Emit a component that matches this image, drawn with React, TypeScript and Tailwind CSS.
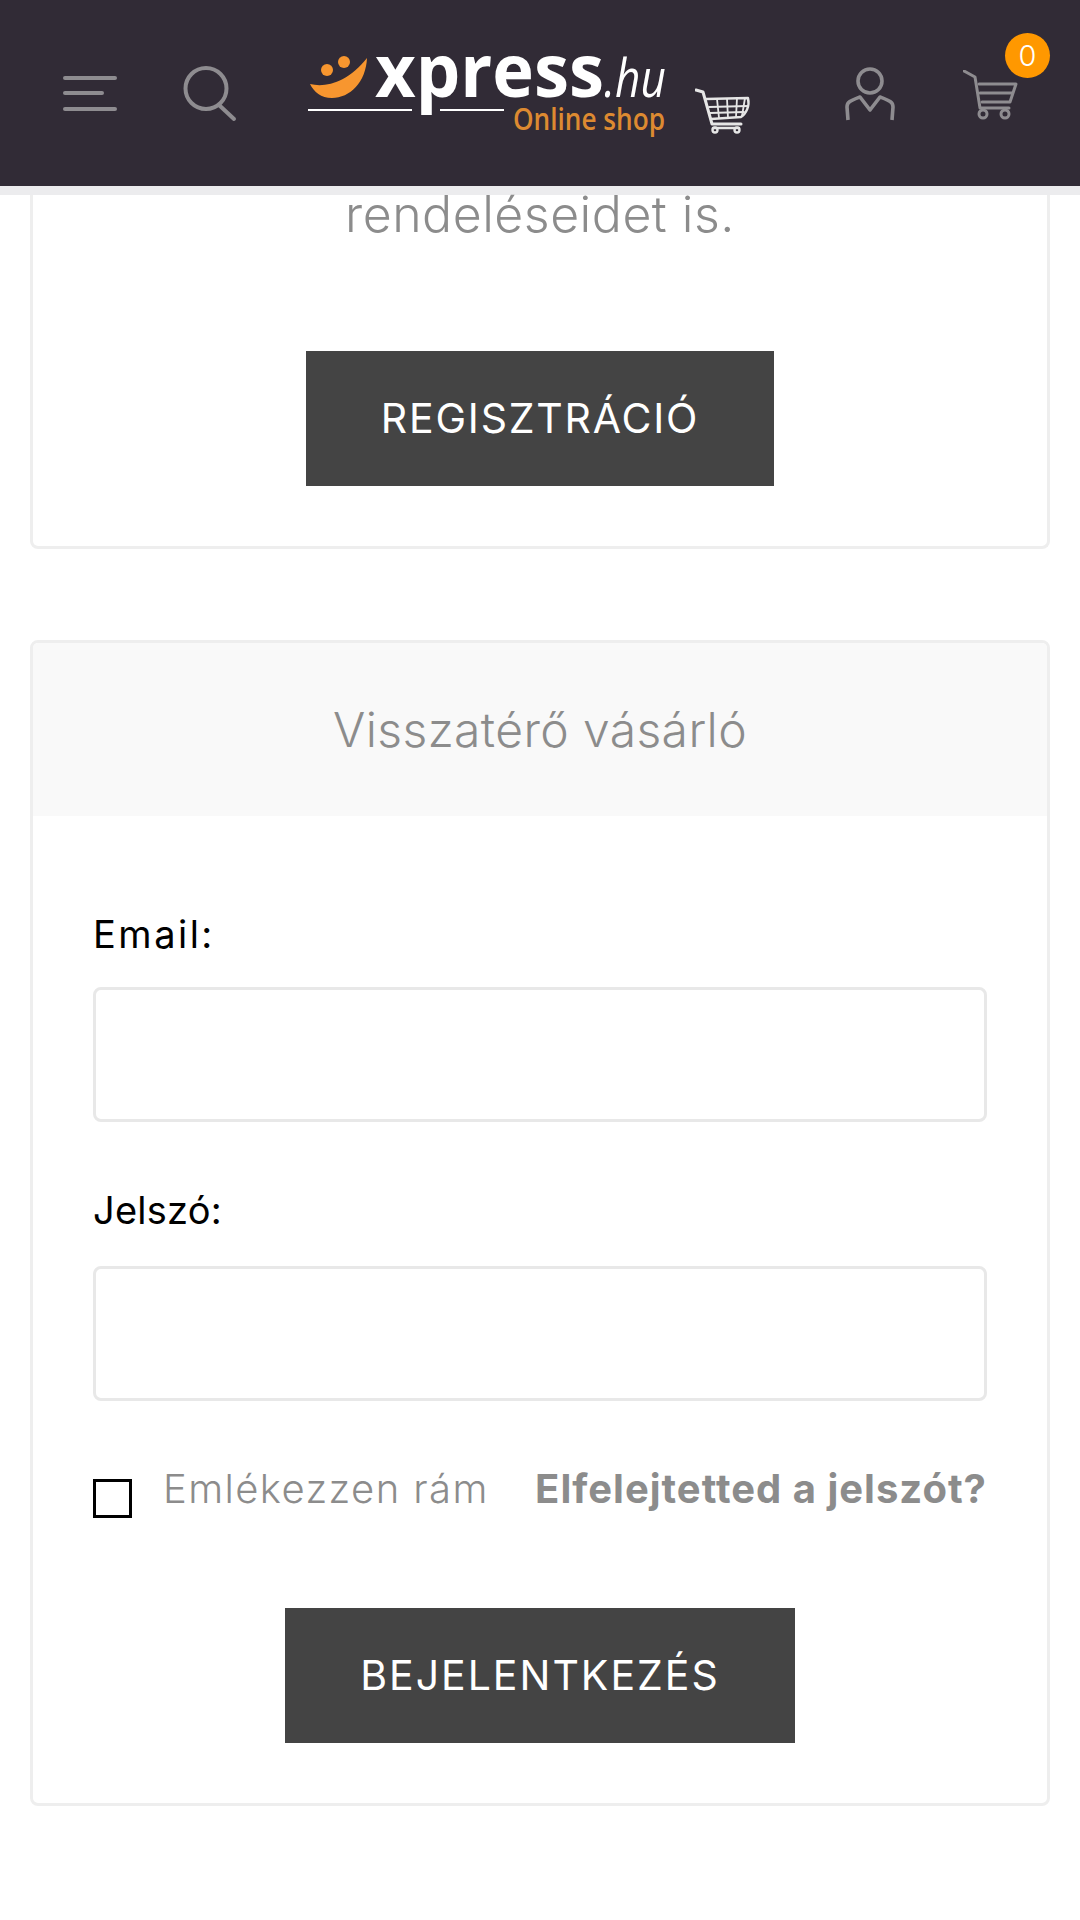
function Hamburger() {
  return (
    <svg width="54" height="37" viewBox="0 0 54 37" fill="none" stroke="#8e8c90" strokeWidth="4" strokeLinecap="round">
      <path d="M2 2H52" />
      <path d="M2 17H39" />
      <path d="M2 33H52" />
    </svg>
  );
}

function SearchIcon() {
  return (
    <svg width="54" height="56" viewBox="0 0 54 56" fill="none" stroke="#8e8c90" strokeWidth="4" strokeLinecap="round">
      <circle cx="23" cy="22.500" r="20.500" />
      <path d="M36 39L51 53" />
    </svg>
  );
}

function Logo() {
  return (
    <svg width="360" height="95" viewBox="0 0 360 95" fill="none" className="overflow-visible">
      <path d="M2 34C18 38 40 32 59 8C58 32 42 48 24 48C13 48 6 42 2 34Z" fill="#f7962f" />
      <circle cx="19" cy="20" r="6" fill="#f7962f" />
      <circle cx="36" cy="12" r="6" fill="#f7962f" />
      <path d="M0 60H104M132 60H196" stroke="#ffffff" strokeWidth="2" />
      <text x="67" y="47" fill="#ffffff" fontFamily="'Open Sans', sans-serif" fontWeight="700" fontSize="74" textLength="229" lengthAdjust="spacingAndGlyphs">
        xpress
      </text>
      <text x="296" y="47" fill="#ffffff" fontFamily="'Open Sans', sans-serif" fontStyle="italic" fontSize="53" textLength="62" lengthAdjust="spacingAndGlyphs">
        .hu
      </text>
      <text x="205" y="80" fill="#dd8a31" fontFamily="'Open Sans', sans-serif" fontWeight="600" fontSize="30" textLength="152" lengthAdjust="spacingAndGlyphs">
        Online shop
      </text>
    </svg>
  );
}

function WireCart() {
  return (
    <svg width="56" height="46" viewBox="0 0 56 46" fill="none" stroke="#e6e6e6" strokeWidth="2.400" strokeLinecap="round" strokeLinejoin="round">
      <path d="M1 2L8 4L17 36H46" strokeWidth="3" />
      <path d="M11 11L53 10C55 18 51 26 46 29L16 31" />
      <path d="M14 19L53 18M15 25L49 24" strokeWidth="1.800" />
      <path d="M22 11L24 30M32 11L33 30M42 10L41 29M50 10L47 28" strokeWidth="1.800" />
      <path d="M18 40H44" strokeWidth="2.500" />
      <circle cx="20" cy="42" r="2.500" />
      <circle cx="42" cy="42" r="2.500" />
    </svg>
  );
}

function UserIcon() {
  return (
    <svg width="50" height="56" viewBox="0 0 50 56" fill="none" stroke="#8e8c90" strokeWidth="3.600" strokeLinejoin="round">
      <circle cx="25" cy="15" r="12" />
      <path d="M3 54L2 41C2 36 5 35 15 31L25 44L35 31C45 35 48 36 48 41L47 54" />
    </svg>
  );
}

function CartIcon() {
  return (
    <svg width="56" height="50" viewBox="0 0 56 50" fill="none" stroke="#8e8c90" strokeWidth="3" strokeLinecap="round" strokeLinejoin="round">
      <path d="M1 1L12 7L17 38H46" />
      <path d="M16 14H53L47 32H19" />
      <path d="M17 23H49" />
      <circle cx="20" cy="44" r="4" />
      <circle cx="42" cy="44" r="4" />
    </svg>
  );
}

export default function App() {
  return (
    <div className="w-[1080px] h-[1920px] bg-white overflow-hidden font-[Inter,sans-serif]">
      <header className="h-[186px] bg-[#312b36] flex items-start pl-[63px]">
        <div className="mt-[76px]"><Hamburger /></div>
        <div className="ml-[66px] mt-[66px]"><SearchIcon /></div>
        <div className="ml-[71px] mt-[50px]"><Logo /></div>
        <div className="ml-[27px] mt-[88px]"><WireCart /></div>
        <div className="ml-[94px] mt-[66px]"><UserIcon /></div>
        <div className="ml-[68px] mt-[70px] relative">
          <CartIcon />
          <span className="absolute -top-[37px] left-[42px] w-[45px] h-[45px] rounded-full bg-[#ff9800] text-white text-[29px] font-light leading-[45px] text-center">0</span>
        </div>
      </header>
      <div className="h-[9px] bg-[#ececee]" />

      <main className="px-[30px]">
        <section className="h-[354px] border-x-[3px] border-b-[3px] border-[#eeeeee] rounded-b-lg flex flex-col items-center">
          <p className="text-[50px] leading-[38px] font-light text-[#8c8c8c] tracking-[0.5px]">rendeléseidet is.</p>
          <button className="mt-[118px] w-[468px] h-[135px] bg-[#444444] text-white text-[41px] font-normal tracking-[1.8px]">REGISZTRÁCIÓ</button>
        </section>

        <section className="mt-[91px] h-[1166px] border-[3px] border-[#eeeeee] rounded-lg overflow-hidden">
          <div className="h-[173px] bg-[#f9f9f9] flex items-center justify-center">
            <h2 className="text-[48px] font-light text-[#8c8c8c] tracking-[0.4px]">Visszatérő vásárló</h2>
          </div>
          <div className="px-[60px] pt-[96px]">
            <label className="block text-[38px] leading-[44px] tracking-[2.5px] text-black">Email:</label>
            <input className="mt-[31px] block w-full h-[135px] rounded-lg border-[3px] border-[#e8e8e8] bg-white" />
            <label className="block mt-[66px] text-[38px] leading-[44px] tracking-[0.25px] text-black">Jelszó:</label>
            <input className="mt-[34px] block w-full h-[135px] rounded-lg border-[3px] border-[#e8e8e8] bg-white" />
            <div className="mt-[63px] flex items-start justify-between">
              <div className="flex items-start">
                <span className="mt-[15px] w-[39px] h-[39px] border-[3px] border-black block" />
                <span className="ml-[31px] text-[40px] leading-[50px] font-light tracking-[1.4px] text-[#8c8c8c]">Emlékezzen rám</span>
              </div>
              <a className="text-[40px] leading-[50px] font-bold tracking-[1px] text-[#8c8c8c]">Elfelejtetted a jelszót?</a>
            </div>
            <button className="block mx-auto mt-[90px] w-[510px] h-[135px] bg-[#444444] text-white text-[41px] tracking-[2px]">BEJELENTKEZÉS</button>
          </div>
        </section>
      </main>
    </div>
  );
}
